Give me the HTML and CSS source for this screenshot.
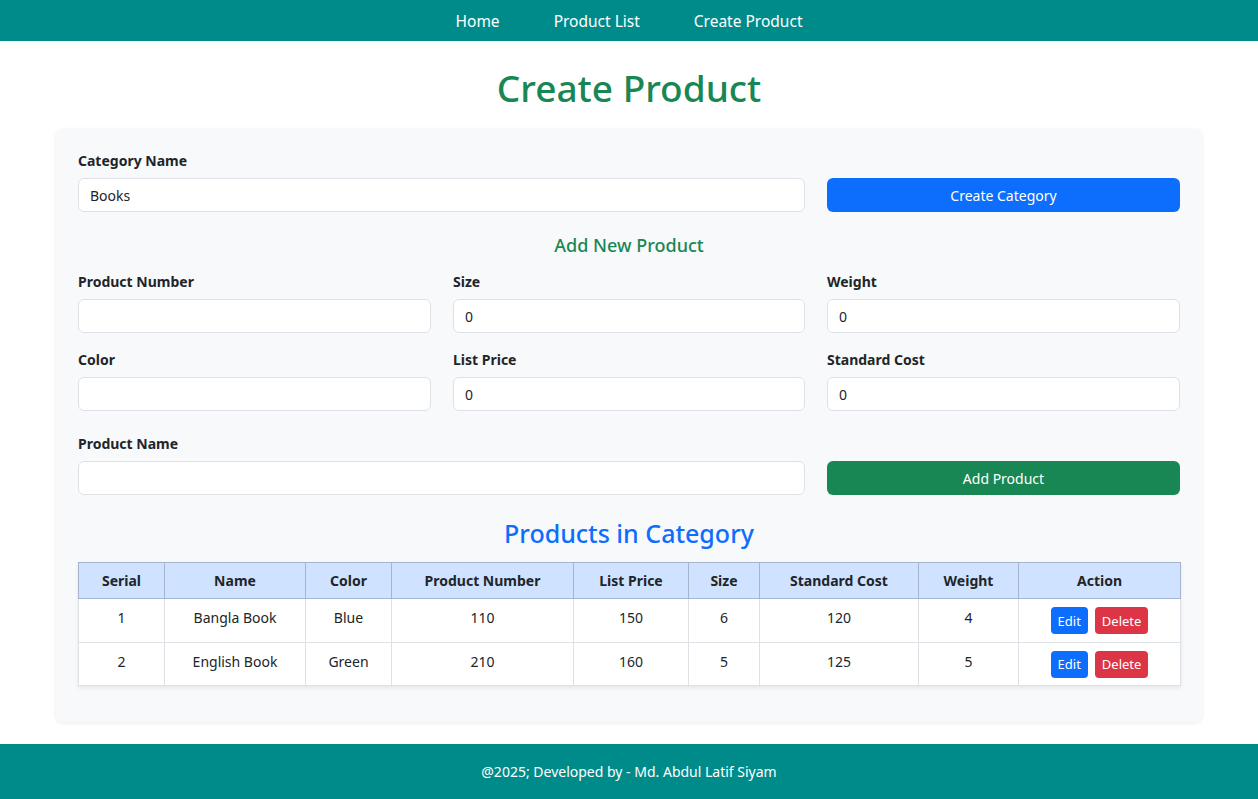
FILE: index.html
```html
<!DOCTYPE html>
<html lang="en">
<head>
<meta charset="utf-8">
<title>Create Product</title>
<link rel="stylesheet" href="styles.css">
</head>
<body>
<nav class="topnav">
  <a href="#" class="nav-link">Home</a>
  <a href="#" class="nav-link">Product List</a>
  <a href="#" class="nav-link">Create Product</a>
</nav>

<main class="page">
  <h1 class="page-title">Create Product</h1>

  <section class="card">
    <div class="row row-cat">
      <div class="field">
        <label class="label">Category Name</label>
        <input class="input" type="text" value="Books">
      </div>
      <button class="btn btn-blue">Create Category</button>
    </div>

    <h5 class="sub-title">Add New Product</h5>

    <div class="grid3">
      <div class="field">
        <label class="label">Product Number</label>
        <input class="input" type="text">
      </div>
      <div class="field">
        <label class="label">Size</label>
        <input class="input" type="text" value="0">
      </div>
      <div class="field">
        <label class="label">Weight</label>
        <input class="input" type="text" value="0">
      </div>
      <div class="field">
        <label class="label">Color</label>
        <input class="input" type="text">
      </div>
      <div class="field">
        <label class="label">List Price</label>
        <input class="input" type="text" value="0">
      </div>
      <div class="field">
        <label class="label">Standard Cost</label>
        <input class="input" type="text" value="0">
      </div>
    </div>

    <div class="row row-name">
      <div class="field">
        <label class="label">Product Name</label>
        <input class="input" type="text">
      </div>
      <button class="btn btn-green">Add Product</button>
    </div>

    <h3 class="table-title">Products in Category</h3>

    <table class="ptable">
      <colgroup>
        <col class="c-serial"><col class="c-name"><col class="c-color"><col class="c-pnum"><col class="c-price"><col class="c-size"><col class="c-cost"><col class="c-weight"><col class="c-action">
      </colgroup>
      <thead>
        <tr>
          <th>Serial</th><th>Name</th><th>Color</th><th>Product Number</th><th>List Price</th><th>Size</th><th>Standard Cost</th><th>Weight</th><th>Action</th>
        </tr>
      </thead>
      <tbody>
        <tr>
          <td>1</td><td>Bangla Book</td><td>Blue</td><td>110</td><td>150</td><td>6</td><td>120</td><td>4</td>
          <td><div class="actions"><button class="btn-sm btn-blue">Edit</button><button class="btn-sm btn-red">Delete</button></div></td>
        </tr>
        <tr>
          <td>2</td><td>English Book</td><td>Green</td><td>210</td><td>160</td><td>5</td><td>125</td><td>5</td>
          <td><div class="actions"><button class="btn-sm btn-blue">Edit</button><button class="btn-sm btn-red">Delete</button></div></td>
        </tr>
      </tbody>
    </table>
  </section>
</main>

<footer class="footer">@2025; Developed by - Md. Abdul Latif Siyam</footer>
</body>
</html>
```

FILE: styles.css
```css
* { box-sizing: border-box; }

html, body {
  margin: 0;
  padding: 0;
}

body {
  font-family: "Noto Sans", "Open Sans", sans-serif;
  color: #212529;
  background: #fff;
  font-size: 14px;
}

.topnav {
  height: 41px;
  background: #008b8b;
  display: flex;
  justify-content: center;
  align-items: center;
  gap: 54px;
}

.nav-link {
  color: #fff;
  text-decoration: none;
  font-size: 15.5px;
}

.page-title {
  margin: 23px 0 18px;
  text-align: center;
  color: #198754;
  font-size: 37px;
  font-weight: 500;
  line-height: 47px;
}

.card {
  width: 1146px;
  margin: 0 auto;
  background: #f8f9fa;
  border-radius: 7px;
  box-shadow: 0 1px 4px rgba(0, 0, 0, 0.08);
  padding: 21px 22px 36px 22px;
}

.row {
  display: grid;
  grid-template-columns: 727px 353px;
  column-gap: 22px;
  align-items: end;
}

.field {
  display: flex;
  flex-direction: column;
}

.label {
  font-weight: 700;
  font-size: 14px;
  line-height: 21px;
  margin-bottom: 7px;
}

.input {
  height: 34px;
  border: 1px solid #dee2e6;
  border-radius: 6px;
  background: #fff;
  padding: 0 11px;
  font-family: inherit;
  font-size: 14px;
  color: #212529;
}

.btn {
  height: 34px;
  border: none;
  border-radius: 6px;
  color: #fff;
  font-family: inherit;
  font-size: 14px;
}

.btn-blue { background: #0d6efd; color: #fff; }
.btn-green { background: #198754; }
.btn-red { background: #dc3545; color: #fff; }

.sub-title {
  margin: 21px 0 14px;
  text-align: center;
  color: #198754;
  font-size: 18px;
  font-weight: 500;
  line-height: 24px;
}

.grid3 {
  display: grid;
  grid-template-columns: 353px 352px 353px;
  column-gap: 22px;
  row-gap: 16px;
}

.row-name {
  margin-top: 22px;
}

.table-title {
  margin: 21px 0 12px;
  text-align: center;
  color: #0d6efd;
  font-size: 25px;
  font-weight: 500;
  line-height: 34px;
}

.ptable {
  width: 1102px;
  border-collapse: collapse;
  table-layout: fixed;
  background: #fff;
  box-shadow: 0 2px 4px rgba(0, 0, 0, 0.08);
  font-size: 14px;
}

.c-serial { width: 86px; }
.c-name { width: 141px; }
.c-color { width: 86px; }
.c-pnum { width: 182px; }
.c-price { width: 115px; }
.c-size { width: 71px; }
.c-cost { width: 159px; }
.c-weight { width: 100px; }
.c-action { width: 162px; }

.ptable th {
  background: #cfe2ff;
  border: 1px solid #a6b5cc;
  font-weight: 700;
  padding: 7px 6px 7px;
  line-height: 21px;
  text-align: center;
}

.ptable td {
  border: 1px solid #dee2e6;
  padding: 8px 6px 7.5px;
  line-height: 21px;
  text-align: center;
  vertical-align: top;
}

.actions {
  display: flex;
  justify-content: center;
  gap: 7px;
}

.btn-sm {
  height: 27px;
  border: none;
  border-radius: 4px;
  padding: 0 7px;
  font-family: inherit;
  font-size: 13px;
}

.footer {
  margin-top: 22px;
  height: 55px;
  background: #008b8b;
  color: #fff;
  display: flex;
  align-items: center;
  justify-content: center;
  font-size: 14px;
}
```
